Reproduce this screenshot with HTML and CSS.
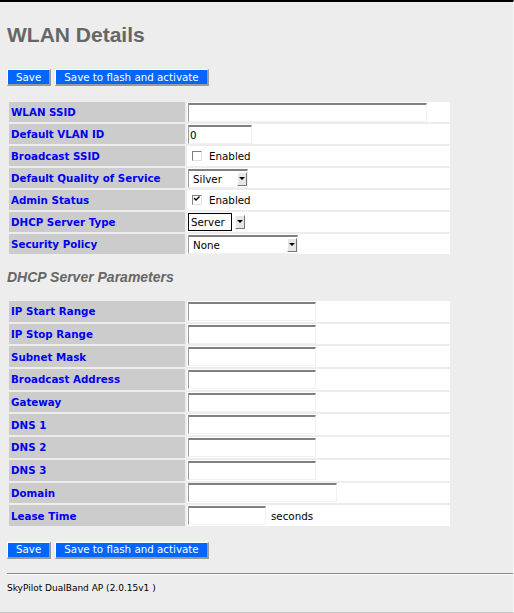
FILE: index.html
```html
<!DOCTYPE html>
<html lang="en">
    <head>
        <meta charset="UTF-8">
        <meta name="viewport" content="width=device-width, initial-scale=1.0">
        <title>WLAN Details</title>
        <link rel="stylesheet" href="styles.css">
    </head>
    <body>
        <div class="page">
            <h1>WLAN Details</h1>
            <div class="actions">
                <button class="btn">Save</button>
                <button class="btn">Save to flash and activate</button>
            </div>

            <table class="form">
                <tr>
                    <td class="label">WLAN SSID</td>
                    <td class="value"><input type="text" class="text w-ssid" value=""></td>
                </tr>
                <tr>
                    <td class="label">Default VLAN ID</td>
                    <td class="value"><input type="text" class="text w-vlan" value="0"></td>
                </tr>
                <tr>
                    <td class="label">Broadcast SSID</td>
                    <td class="value">
                        <div class="opt"><span class="check"></span>Enabled</div>
                    </td>
                </tr>
                <tr>
                    <td class="label">Default Quality of Service</td>
                    <td class="value">
                        <span class="select w-silver"><span class="sel-text">Silver</span><span class="sel-arrow"></span></span>
                    </td>
                </tr>
                <tr>
                    <td class="label">Admin Status</td>
                    <td class="value">
                        <div class="opt">
                            <span class="check"><svg width="8" height="6" viewBox="0 0 8 6"><path d="M1 2 L3 4 L6.5 0.5" fill="none" stroke="#000" stroke-width="1.4"/></svg></span>Enabled
                        </div>
                    </td>
                </tr>
                <tr>
                    <td class="label">DHCP Server Type</td>
                    <td class="value">
                        <span class="select focus w-server"><span class="sel-text">Server</span><span class="sel-arrow"></span></span>
                    </td>
                </tr>
                <tr>
                    <td class="label">Security Policy</td>
                    <td class="value">
                        <span class="select w-none"><span class="sel-text">None</span><span class="sel-arrow"></span></span>
                    </td>
                </tr>
            </table>

            <h2>DHCP Server Parameters</h2>

            <table class="form dhcp">
                <tr><td class="label">IP Start Range</td><td class="value"><input type="text" class="text w-ip"></td></tr>
                <tr><td class="label">IP Stop Range</td><td class="value"><input type="text" class="text w-ip"></td></tr>
                <tr><td class="label">Subnet Mask</td><td class="value"><input type="text" class="text w-ip"></td></tr>
                <tr><td class="label">Broadcast Address</td><td class="value"><input type="text" class="text w-ip"></td></tr>
                <tr><td class="label">Gateway</td><td class="value"><input type="text" class="text w-ip"></td></tr>
                <tr><td class="label">DNS 1</td><td class="value"><input type="text" class="text w-ip"></td></tr>
                <tr><td class="label">DNS 2</td><td class="value"><input type="text" class="text w-ip"></td></tr>
                <tr><td class="label">DNS 3</td><td class="value"><input type="text" class="text w-ip"></td></tr>
                <tr><td class="label">Domain</td><td class="value"><input type="text" class="text w-domain"></td></tr>
                <tr>
                    <td class="label">Lease Time</td>
                    <td class="value">
                        <div class="inline"><input type="text" class="text w-lease"><span>seconds</span></div>
                    </td>
                </tr>
            </table>

            <div class="actions bottom">
                <button class="btn">Save</button>
                <button class="btn">Save to flash and activate</button>
            </div>

            <hr>
            <div class="footer">SkyPilot DualBand AP (2.0.15v1 )</div>
        </div>
    </body>
</html>
```

FILE: styles.css
```css
html {
    background: #ededed;
}
body {
    margin: 0;
    min-height: 100vh;
    box-sizing: border-box;
    background: #ededed;
    border-top: 2px solid #000;
    border-bottom: 1px solid #c6c6c6;
    border-right: 1px solid #f6f6f6;
    font-family: "DejaVu Sans", Verdana, sans-serif;
    font-size: 10.3px;
    color: #000;
}
.page {
    padding-left: 7px;
}
h1 {
    margin: 21px 0 0;
    font: bold 21px/24px "Liberation Sans", Arial, sans-serif;
    color: #666;
}
h2 {
    margin: 13px 0 0;
    font: italic bold 14px/16px "Liberation Sans", Arial, sans-serif;
    color: #666;
}

/* buttons */
.actions {
    display: flex;
    gap: 4px;
    margin-top: 22px;
}
.actions.bottom {
    margin-top: 14px;
}
.btn {
    height: 17px;
    padding: 0 8px;
    margin: 0;
    background: #0066ff;
    color: #fff;
    font: 10.3px/13px "DejaVu Sans", Verdana, sans-serif;
    border-style: solid;
    border-width: 1px 2px 2px 1px;
    border-color: #fff #9a9a9a #9a9a9a #fff;
}

/* form tables */
.form {
    margin-top: 14px;
    width: 445px;
    table-layout: fixed;
    border-spacing: 2px;
}
.form td {
    box-sizing: border-box;
    height: 20px;
    padding: 0;
    vertical-align: middle;
}
.dhcp td {
    height: 20.7px;
}
.label {
    width: 176px;
    padding-left: 2px !important;
    background: #ccc;
    color: #0000f0;
    font-weight: bold;
}
.value {
    background: #fff;
    padding-left: 1px !important;
}

.text {
    display: block;
    box-sizing: border-box;
    height: 19px;
    margin: 0;
    padding: 0 1px;
    background: #fff;
    font: 10.3px "DejaVu Sans", Verdana, sans-serif;
    border-style: solid;
    border-width: 2px 1px 1px 1px;
    border-color: #808080 #f2f2f2 #f2f2f2 #9a9a9a;
    outline: none;
}
.w-ssid { width: 239px; }
.w-vlan { width: 64px; }
.w-ip { width: 128px; }
.w-domain { width: 149px; }
.w-lease { width: 78px; }

.inline {
    display: flex;
    align-items: center;
    gap: 5px;
}

/* checkboxes */
.opt {
    display: flex;
    align-items: center;
    gap: 7px;
}
.check {
    display: inline-block;
    box-sizing: border-box;
    width: 10px;
    height: 10px;
    margin-left: 4px;
    background: #fff;
    border-style: solid;
    border-width: 1px;
    border-color: #808080 #e2e2e2 #e2e2e2 #808080;
}
.check svg {
    display: block;
}

/* drop downs */
.select {
    display: inline-flex;
    align-items: center;
    box-sizing: border-box;
    height: 19px;
    vertical-align: middle;
    background: #fff;
    border-style: solid;
    border-width: 2px 1px 1px 1px;
    border-color: #808080 #f0f0f0 #f0f0f0 #9a9a9a;
}
.sel-text {
    flex: 1;
    padding-left: 4px;
}
.sel-arrow {
    position: relative;
    box-sizing: border-box;
    width: 10px;
    height: 14px;
    background: #e6e6e6;
    border-style: solid;
    border-width: 1px;
    border-color: #fff #777 #777 #fff;
}
.sel-arrow::after {
    content: "";
    position: absolute;
    left: 1px;
    top: 4px;
    border-left: 3px solid transparent;
    border-right: 3px solid transparent;
    border-top: 3px solid #000;
}
.w-silver { width: 60px; }
.w-none { width: 110px; }
.w-server {
    width: 57px;
    border: none;
    background: transparent;
}
.select.focus .sel-text {
    height: 18px;
    line-height: 16px;
    box-sizing: border-box;
    border: 1px solid #000;
    background: #fff;
    padding-left: 2px;
    margin-right: 3px;
}

hr {
    margin: 14px 0 0;
    height: 0;
    border: 0;
    border-top: 1px solid #888;
    border-bottom: 1px solid #fafafa;
}
.footer {
    margin-top: 8px;
    font-size: 9px;
}
```
